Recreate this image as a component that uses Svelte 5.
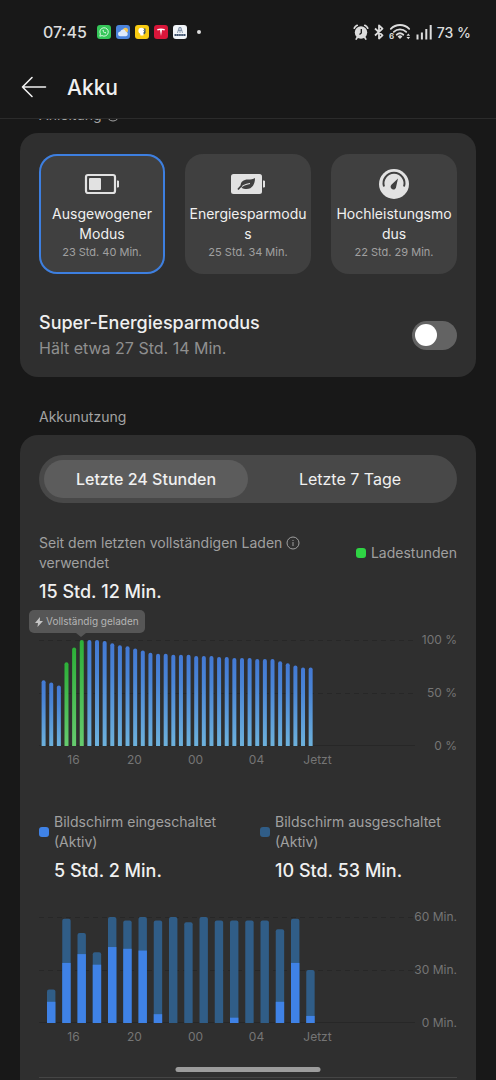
<script>
	const modes = [
		{ id: 'balanced', name: 'Ausgewogener Modus', time: '23 Std. 40 Min.' },
		{ id: 'saver', name: 'Energiesparmodus', time: '25 Std. 34 Min.' },
		{ id: 'performance', name: 'Hochleistungsmodus', time: '22 Std. 29 Min.' }
	];

	// battery level in percent, one value per half hour
	const levels = [
		62, 60, 57, 79, 93, 100, 100, 100, 99, 97, 95, 94, 92, 90, 88, 87, 87, 86, 86, 86, 85, 85, 85,
		84, 84, 83, 83, 83, 82, 82, 82, 80, 78, 76, 74, 74
	];
	const charging = [3, 4, 5];

	// minutes per hour: [active in total, of which screen on]
	const activity = [
		[19, 12], [59, 34], [51, 39], [40, 33], [60, 43], [58, 42], [60, 41], [58, 5], [60, 0],
		[57, 0], [60, 0], [58, 0], [58, 3], [58, 0], [58, 0], [53, 12], [59, 34], [30, 4]
	];

	const hours = ['16', '20', '00', '04', 'Jetzt'];
	const plotHeight = 106;

	let mode = $state('balanced');
	let superSaver = $state(false);
	let range = $state('day');
</script>

<div class="screen">
	<div class="status">
		<span class="clock">07:45</span>
		<div class="apps">
			<svg viewBox="0 0 14 14">
				<rect width="14" height="14" rx="3" fill="#35c759" />
				<path d="M2.800 11.200l.6-2.200A4.200 4.200 0 1 1 5 10.600z" fill="none" stroke="#e9fbee" stroke-width=".9" />
				<path d="M5.600 5c-.4 1.400 1.500 3.500 3.200 3.400l.3-.9-1-.6-.5.5c-.6-.3-1-.8-1.200-1.300l.5-.5-.5-.9z" fill="#e9fbee" />
			</svg>
			<svg viewBox="0 0 14 14">
				<rect width="14" height="14" rx="3" fill="#4c84dc" />
				<circle cx="9.500" cy="5.300" r="2.500" fill="#f5c451" />
				<path d="M4.500 11.200a2.400 2.400 0 0 1-.2-4.800 3 3 0 0 1 5.600.3 2.300 2.300 0 0 1 .1 4.500z" fill="#dfeafb" />
			</svg>
			<svg viewBox="0 0 14 14">
				<rect width="14" height="14" rx="3" fill="#f8cb12" />
				<path d="M7 3.500h3.500V8L9 9.500 7 8z" fill="#35505f" />
				<circle cx="6.400" cy="5.700" r="3" fill="#fff" />
				<path d="M5 8h3.500v2.500H5.500z" fill="#fff" />
				<path d="M8.500 5l1 1.500-1 1" fill="none" stroke="#35505f" stroke-width=".7" />
			</svg>
			<svg viewBox="0 0 14 14">
				<rect width="14" height="14" rx="3" fill="#d9163a" />
				<path d="M3 4.200c2.500-1 5.500-1 8 0l-.6 1.200-2.400-.5L7 11 6 4.900l-2.400.5z" fill="#fff" />
			</svg>
			<svg viewBox="0 0 14 14">
				<rect width="14" height="14" rx="3" fill="#f1f4f8" />
				<path d="M4.500 8L6 2.500h2L9.500 8M5 5.500h4M7 2.500V8" fill="none" stroke="#7d8fa5" stroke-width=".9" />
				<path d="M1.500 10h11" stroke="#3d516c" stroke-width="2" stroke-dasharray="1.600 .3" />
			</svg>
		</div>
		<span class="more"></span>
		<div class="system">
			<svg width="16" height="16" viewBox="0 0 16 16">
				<circle cx="8" cy="8.500" r="6.200" fill="#dcdcdc" />
				<path d="M1.300 4.200A6 6 0 0 1 4.200 1.300M11.800 1.300a6 6 0 0 1 2.900 2.900M4.200 13.500l-1 1.600M11.800 13.500l1 1.600" fill="none" stroke="#dcdcdc" stroke-width="1.700" stroke-linecap="round" />
				<path d="M8.300 5v4L6.500 10.400" fill="none" stroke="#181818" stroke-width="1.300" />
			</svg>
			<svg width="10" height="16" viewBox="0 0 10 16">
				<path d="M1 4.500l7.500 6.800L5 14.500v-13l3.500 3.200L1 11.500" fill="none" stroke="#dcdcdc" stroke-width="1.800" stroke-linejoin="round" />
			</svg>
			<svg width="22" height="16" viewBox="0 0 22 16">
				<g fill="none" stroke="#dcdcdc" stroke-width="1.800" stroke-linecap="round">
					<path d="M1.800 4.800a13 13 0 0 1 18.400 0" />
					<path d="M4.800 7.900a9 9 0 0 1 12.400 0" />
					<path d="M7.700 10.700a5 5 0 0 1 6.600 0" />
				</g>
				<path d="M8.600 12.400a3.500 3.500 0 0 1 4.800 0L11 15z" fill="#dcdcdc" />
				<path d="M17.500 11.800L19.300 9.600l1.800 2.200zM17.500 13l1.800 2.200 1.800-2.200z" fill="#dcdcdc" />
				<text x="0" y="15" font-size="8" font-weight="700" fill="#dcdcdc">6</text>
			</svg>
			<svg width="16" height="16" viewBox="0 0 16 16">
				<path d="M1.500 15.500v-5M5.900 15.500V8.500M10.300 15.500V5M14.700 15.500V1" stroke="#dcdcdc" stroke-width="2" />
			</svg>
			<span>73 %</span>
		</div>
	</div>

	<header>
		<button class="back" aria-label="Zurück">
			<svg width="26" height="22" viewBox="0 0 26 22" fill="none" stroke="#f0f0f0" stroke-width="1.600" stroke-linecap="round" stroke-linejoin="round">
				<path d="M24.500 11H1.500M11 1.500L1.500 11l9.500 9.500" />
			</svg>
		</button>
		<h1>Akku</h1>
	</header>

	<main>
		<h2 class="guide">
			Anleitung
			<svg width="14" height="14" viewBox="0 0 14 14" fill="none" stroke="currentColor">
				<circle cx="7" cy="7" r="6" />
				<path d="M7 6v4M7 4v1" />
			</svg>
		</h2>

		<section class="card">
			<div class="modes">
				{#each modes as m (m.id)}
					<button class="mode" class:active={mode === m.id} aria-pressed={mode === m.id} onclick={() => (mode = m.id)}>
						<svg width="36" height="30" viewBox="0 0 36 30">
							{#if m.id === 'balanced'}
								<rect x="2" y="6" width="29" height="18" rx="2" fill="none" stroke="#e2e2e2" stroke-width="2.200" />
								<rect x="5" y="9" width="12" height="12" rx="1" fill="#e2e2e2" />
								<path d="M33 12h1.500v6H33" fill="#e2e2e2" stroke="#e2e2e2" />
							{:else if m.id === 'saver'}
								<rect x="1" y="5" width="31" height="20" rx="2.500" fill="#e2e2e2" />
								<path d="M33 12h1.500v6H33" fill="#e2e2e2" stroke="#e2e2e2" />
								<path d="M10.500 17.500c0-5 3-7 7.500-7 3 0 5 0 7-1.500 0 6-2.500 11-8.500 11-2 0-3.500-.4-4.500-1z" fill="#404040" />
								<path d="M9 20.500c3-4 6.500-5.500 11-6" fill="none" stroke="#e2e2e2" stroke-width="1.200" />
								<path d="M8 20.500c1.200-1.800 2.500-3 4-4" fill="none" stroke="#404040" stroke-width="1.600" />
							{:else}
								<circle cx="18" cy="15" r="15" fill="#e2e2e2" />
								<path d="M8 17.500a10.500 10.500 0 1 1 20 0" fill="none" stroke="#404040" stroke-width="2" />
								<path d="M22 9.500l-1.800 8a2.800 2.800 0 1 1-4.800-1.800z" fill="#404040" />
							{/if}
						</svg>
						<span class="mode-name">{m.name}</span>
						<span class="mode-time">{m.time}</span>
					</button>
				{/each}
			</div>

			<label class="setting">
				<span>
					<span class="setting-title">Super-Energiesparmodus</span>
					<span class="setting-sub">Hält etwa 27 Std. 14 Min.</span>
				</span>
				<input type="checkbox" role="switch" bind:checked={superSaver} />
			</label>
		</section>

		<h2>Akkunutzung</h2>

		<section class="card usage">
			<div class="tabs">
				<button class:active={range === 'day'} onclick={() => (range = 'day')}>Letzte 24 Stunden</button>
				<button class:active={range === 'week'} onclick={() => (range = 'week')}>Letzte 7 Tage</button>
			</div>

			<div class="summary">
				<p>
					Seit dem letzten vollständigen Laden
					<svg width="14" height="14" viewBox="0 0 14 14" fill="none" stroke="currentColor">
						<circle cx="7" cy="7" r="6" />
						<path d="M7 6v4M7 4v1" />
					</svg>
					verwendet
				</p>
				<span class="key"><i class="dot green"></i>Ladestunden</span>
			</div>
			<strong>15 Std. 12 Min.</strong>

			<div class="chart level">
				<div class="plot">
					<svg viewBox="0 0 376 {plotHeight}" preserveAspectRatio="none">
						<defs>
							<linearGradient id="blue" x2="0" y2="1">
								<stop offset="0" stop-color="#4379d4" />
								<stop offset=".3" stop-color="#4a85d6" />
								<stop offset="1" stop-color="#6fb4dc" />
							</linearGradient>
							<linearGradient id="green" x2="0" y2="1">
								<stop offset="0" stop-color="#2cb038" />
								<stop offset="1" stop-color="#68cc70" />
							</linearGradient>
						</defs>
						<path class="grid" d="M0 .5H376M0 53.500H376" />
						<path class="base" d="M0 105.500H376" />
						{#each levels as value, i}
							<rect
								x={2.6 + i * 7.63}
								y={plotHeight * (1 - value / 100)}
								width="4"
								height={(plotHeight * value) / 100 + 3}
								rx="2"
								fill={charging.includes(i) ? 'url(#green)' : 'url(#blue)'}
							/>
						{/each}
					</svg>
					<div class="tip">
						<svg width="8" height="10" viewBox="0 0 8 10"><path d="M5 0L0 6h3L2.500 10 8 4H4.800z" fill="#c4c4c4" /></svg>
						Vollständig geladen
					</div>
				</div>
				<div class="scale"><span>100 %</span><span>50 %</span><span>0 %</span></div>
				<div class="hours">
					{#each hours as hour}<span>{hour}</span>{/each}
				</div>
			</div>

			<div class="totals">
				<div class="total">
					<i class="dot on"></i>
					<p>Bildschirm eingeschaltet (Aktiv)</p>
					<strong>5 Std. 2 Min.</strong>
				</div>
				<div class="total">
					<i class="dot off"></i>
					<p>Bildschirm ausgeschaltet (Aktiv)</p>
					<strong>10 Std. 53 Min.</strong>
				</div>
			</div>

			<div class="chart screen-time">
				<div class="plot">
					<svg viewBox="0 0 376 {plotHeight}" preserveAspectRatio="none">
						<path class="grid" d="M0 .5H376M0 53.500H376" />
						<path class="base" d="M0 105.500H376" />
						{#each activity as [total, on], i}
							<rect
								x={8 + i * 15.25}
								y={plotHeight * (1 - total / 60)}
								width="8.4"
								height={(plotHeight * total) / 60 + 3}
								rx="2"
								fill="#305d87"
							/>
							<rect x={8 + i * 15.25} y={plotHeight * (1 - on / 60)} width="8.4" height={(plotHeight * on) / 60} fill="#3f82e6" />
						{/each}
					</svg>
				</div>
				<div class="scale"><span>60 Min.</span><span>30 Min.</span><span>0 Min.</span></div>
				<div class="hours">
					{#each hours as hour}<span>{hour}</span>{/each}
				</div>
			</div>

			<hr />
		</section>
	</main>

	<div class="home-bar"></div>
</div>

<style>
	:global(body) {
		background: #181818;
	}

	.screen {
		display: flex;
		flex-direction: column;
		height: 100vh;
		overflow: hidden;
		background: #181818;
		color: #f0f0f0;
		font-family: Inter, Roboto, sans-serif;
	}

	h1,
	h2,
	p {
		margin: 0;
	}

	button {
		padding: 0;
		border: 0;
		background: none;
		color: inherit;
		font: inherit;
		cursor: pointer;
	}

	.status {
		display: flex;
		align-items: center;
		height: 24px;
		padding: 20px 25px 12px 43px;
		font-size: 16px;
		font-weight: 500;
		color: #dcdcdc;
	}

	.apps {
		display: flex;
		gap: 5px;
		margin-left: 10px;
	}

	.apps svg {
		width: 14px;
		height: 14px;
	}

	.more {
		width: 4px;
		height: 4px;
		margin-left: 10px;
		border-radius: 50%;
		background: #dcdcdc;
	}

	.system {
		display: flex;
		align-items: center;
		gap: 5px;
		margin-left: auto;
		font-size: 14px;
	}

	header {
		display: flex;
		align-items: center;
		gap: 20px;
		height: 62px;
		padding: 0 21px;
		border-bottom: 1px solid #2b2b2b;
	}

	.back {
		display: flex;
	}

	h1 {
		font-size: 21px;
		font-weight: 500;
	}

	main {
		display: flex;
		flex: 1;
		flex-direction: column;
		min-height: 0;
		padding: 0 20px;
		overflow: hidden;
	}

	h2 {
		padding: 30px 19px 8px;
		font-size: 14px;
		font-weight: 400;
		line-height: 20px;
		color: #a3a3a3;
	}

	/* scrolled halfway under the header */
	.guide {
		margin-top: -44px;
	}

	h2 svg,
	.summary svg {
		vertical-align: -2px;
	}

	.card {
		flex-shrink: 0;
		padding: 21px 19px 17px;
		border-radius: 18px;
		background: #2f2f2f;
	}

	.modes {
		display: grid;
		grid-template-columns: repeat(3, 1fr);
		gap: 20px;
	}

	.mode {
		display: flex;
		flex-direction: column;
		align-items: center;
		padding: 15px 3px 14px;
		border-radius: 18px;
		background: #404040;
		text-align: center;
	}

	.mode.active {
		box-shadow: inset 0 0 0 2px #3d7fe0;
	}

	.mode-name {
		width: 100%;
		margin-top: 5px;
		font-size: 14px;
		line-height: 20px;
		overflow-wrap: anywhere;
	}

	.mode-time {
		font-size: 11px;
		line-height: 16px;
		color: #a0a0a0;
	}

	.setting {
		display: flex;
		align-items: center;
		justify-content: space-between;
		margin-top: 36px;
	}

	.setting-title,
	.setting-sub {
		display: block;
	}

	.setting-title {
		font-size: 18px;
		font-weight: 500;
		line-height: 26px;
	}

	.setting-sub {
		font-size: 16px;
		line-height: 24px;
		color: #8f8f8f;
	}

	.setting input {
		display: flex;
		align-items: center;
		width: 45px;
		height: 29px;
		margin: 0;
		padding: 0 3px;
		border-radius: 15px;
		background: #636363;
		box-sizing: border-box;
		appearance: none;
	}

	.setting input::before {
		content: '';
		width: 22px;
		height: 22px;
		border-radius: 50%;
		background: #fff;
	}

	.setting input:checked {
		justify-content: flex-end;
		background: #3d7fe0;
	}

	.usage {
		flex: 1 0 auto;
		padding: 20px 19px 0;
		border-radius: 18px 18px 0 0;
	}

	.tabs {
		display: grid;
		grid-template-columns: 1fr 1fr;
		padding: 5px;
		border-radius: 24px;
		background: #484848;
	}

	.tabs button {
		height: 38px;
		border-radius: 19px;
		font-size: 16px;
	}

	.tabs .active {
		background: #5c5c5c;
		font-weight: 500;
	}

	.summary {
		display: flex;
		align-items: center;
		justify-content: space-between;
		margin: 30px 0 7px;
		font-size: 14px;
		line-height: 20px;
		color: #a0a0a0;
	}

	.summary p {
		max-width: 264px;
	}

	.key {
		display: flex;
		align-items: center;
		gap: 5px;
	}

	.dot {
		width: 10px;
		height: 10px;
		border-radius: 3px;
	}

	.green {
		background: #2fd444;
	}

	.on {
		background: #3f82e6;
	}

	.off {
		background: #305d87;
	}

	strong {
		display: block;
		font-size: 18px;
		font-weight: 500;
		line-height: 24px;
	}

	.chart {
		display: grid;
		grid-template-columns: 1fr 42px;
		font-size: 12px;
		line-height: 20px;
		color: #757575;
	}

	.level {
		margin-top: 36px;
	}

	.screen-time {
		margin-top: 34px;
	}

	.plot {
		position: relative;
	}

	.plot > svg {
		display: block;
		width: 100%;
		height: 106px;
	}

	.grid {
		stroke: #272727;
		stroke-dasharray: 5 4;
	}

	.base {
		stroke: #272727;
	}

	.scale {
		display: flex;
		flex-direction: column;
		align-items: flex-end;
		justify-content: space-between;
		margin: -10px 0;
		white-space: nowrap;
	}

	.hours {
		display: grid;
		grid-template-columns: repeat(5, 61fr) 67fr;
		padding: 4px 0 0 4px;
		text-align: center;
	}

	.tip {
		position: absolute;
		bottom: calc(100% + 7px);
		left: -10px;
		display: flex;
		align-items: center;
		gap: 3px;
		padding: 0 6px;
		border-radius: 5px;
		background: #565656;
		font-size: 10px;
		line-height: 23px;
		color: #b4b4b4;
		white-space: nowrap;
	}

	.tip::after {
		content: '';
		position: absolute;
		top: 100%;
		left: 47px;
		border: 5px solid transparent;
		border-top: 4px solid #565656;
		border-bottom: 0;
	}

	.totals {
		display: grid;
		grid-template-columns: 1fr 1fr;
		gap: 24px;
		margin-top: 42px;
	}

	.total {
		display: grid;
		grid-template-columns: 10px 1fr;
		align-items: center;
		gap: 7px 5px;
	}

	.total p {
		font-size: 14px;
		line-height: 20px;
		color: #a0a0a0;
	}

	.total strong {
		grid-column: 2;
	}

	hr {
		margin: 30px 0 0;
		border: 0;
		border-top: 1px solid #454545;
	}

	.home-bar {
		position: absolute;
		bottom: 8px;
		left: 50%;
		width: 145px;
		height: 5px;
		border-radius: 3px;
		background: #9c9c9c;
		transform: translateX(-50%);
	}
</style>
